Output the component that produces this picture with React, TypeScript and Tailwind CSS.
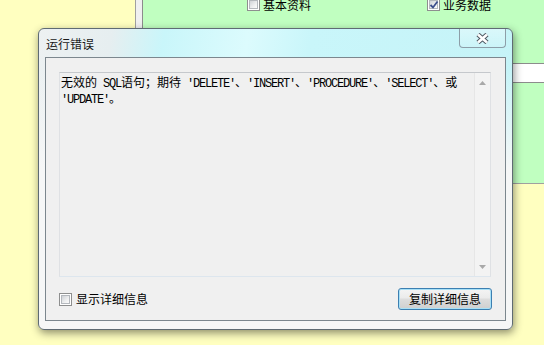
import React from 'react'

const cjk = "[font-family:'Noto_Sans_CJK_SC',sans-serif]"
const mono = "[font-family:'Liberation_Mono',monospace] text-[12px] tracking-[-1.2px]"

function CheckBox({ checked }: { checked?: boolean }) {
  return (
    <span className="relative flex h-[13px] w-[13px] shrink-0 items-center justify-center border border-[#8e8f8f] bg-white">
      <span className="h-[9px] w-[9px] border border-[#b4b8bd] bg-[linear-gradient(135deg,#cfd2d6_0%,#eeeff0_60%,#fbfbfb_100%)]" />
      {checked && (
        <svg className="absolute left-[1px] top-[1px]" width="10" height="10" viewBox="0 0 10 10">
          <path d="M1.5 5 L4 7.5 L8.5 1.5" fill="none" stroke="#3d4f8c" strokeWidth="1.8" />
        </svg>
      )}
    </span>
  )
}

function ArrowUp() {
  return (
    <svg width="7" height="4" viewBox="0 0 7 4">
      <path d="M0 4 L3.5 0 L7 4 Z" fill="#a8a8a8" />
    </svg>
  )
}

function ArrowDown() {
  return (
    <svg width="7" height="4" viewBox="0 0 7 4">
      <path d="M0 0 L7 0 L3.5 4 Z" fill="#a8a8a8" />
    </svg>
  )
}

export default function App() {
  return (
    <div className={`relative h-[345px] w-[544px] overflow-hidden bg-[#ffffc0] text-black ${cjk}`}>
      {/* background window */}
      <div className="ml-[135px] h-[186px] border-b border-l border-[#a0a0a0] bg-[#f0f0f0] pl-[6px]">
        <div className="h-full border-l border-[#8c8c8c] bg-[#c0ffc0]">
          <div className="-mt-[2px] flex h-[13px] items-center pl-[104px] text-[12px] leading-[13px]">
            <div className="flex w-[180px] items-center gap-[3px]">
              <CheckBox />
              <span>基本资料</span>
            </div>
            <div className="flex items-center gap-[3px]">
              <CheckBox checked />
              <span>业务数据</span>
            </div>
          </div>
          <div className="mt-[52px] h-[20px] border-y border-[#8c8c8c] bg-white" />
        </div>
      </div>

      {/* error dialog */}
      <div className="absolute left-[38px] top-[28px] flex h-[302px] w-[475px] flex-col rounded-[6px] border border-[#5f6b73] bg-[linear-gradient(to_bottom,rgba(246,247,247,0)_0px,rgba(246,247,247,0)_40px,#f6f7f7_140px),linear-gradient(100deg,#edf1f2_0%,#e6eef0_14%,#c9f6fa_24%,#dcfbfd_40%,#c9f6fa_52%,#c5f3f7_100%)] shadow-[1px_3px_8px_rgba(0,0,0,0.45)]">
        <div className="flex h-[28px] shrink-0 items-start justify-between">
          <span className="pl-[7px] pt-[8px] text-[12px] leading-[14px] text-[#1a1a1a]">运行错误</span>
          <div className="mr-[6px] flex h-[19px] w-[47px] items-center justify-center rounded-b-[4px] border border-t-0 border-[#8d9ea8] bg-[linear-gradient(to_bottom,rgba(255,255,255,0.35),rgba(255,255,255,0.1))]">
            <svg width="13" height="11" viewBox="0 0 13 11">
              <path d="M2 1.5 L11 9.5 M11 1.5 L2 9.5" stroke="#4f5963" strokeWidth="4.6" />
              <path d="M2 1.5 L11 9.5 M11 1.5 L2 9.5" stroke="#ffffff" strokeWidth="2.6" />
            </svg>
          </div>
        </div>

        <div className="mx-[6px] flex h-[264px] flex-col border border-[#7c878e] bg-[#f0f0f0] px-[13px] pt-[14px]">
          <div className="mr-[1px] flex h-[205px] border border-[#c5c8cc] border-b-[#dde6ee] border-l-[#dfe1e4] border-r-[#dfe1e4] bg-[#f0f0f0]">
            <div className="flex-1 pl-[1px] pt-[2px] text-[12px] leading-[13px]">
              <div className="whitespace-pre">
                无效的<span className={mono}> SQL</span>语句；期待<span className={mono}> ′DELETE′</span>、<span className={mono}>′INSERT′</span>、<span className={mono}>′PROCEDURE′</span>、<span className={mono}>′SELECT′</span>、或
              </div>
              <div className="whitespace-pre">
                <span className={mono}>′UPDATE′</span>。
              </div>
            </div>
            <div className="flex w-[16px] flex-col items-center justify-between border-l border-[#e6e6e6] bg-[#f3f3f3] pb-[7px] pt-[8px]">
              <ArrowUp />
              <ArrowDown />
            </div>
          </div>

          <div className="mt-[11px] flex h-[22px] items-center justify-between">
            <label className="flex items-center gap-[4px] text-[12px] leading-[14px]">
              <CheckBox />
              <span>显示详细信息</span>
            </label>
            <button className="flex h-[22px] w-[94px] items-center justify-center rounded-[3px] border border-[#3c7fb1] bg-[linear-gradient(to_bottom,#f4f4f4_0%,#ebebeb_45%,#dddddd_50%,#cfcfcf_100%)] text-[12px] leading-[14px] shadow-[inset_0_0_0_1px_#a7e0f7]">
              复制详细信息
            </button>
          </div>
        </div>
      </div>
    </div>
  )
}
